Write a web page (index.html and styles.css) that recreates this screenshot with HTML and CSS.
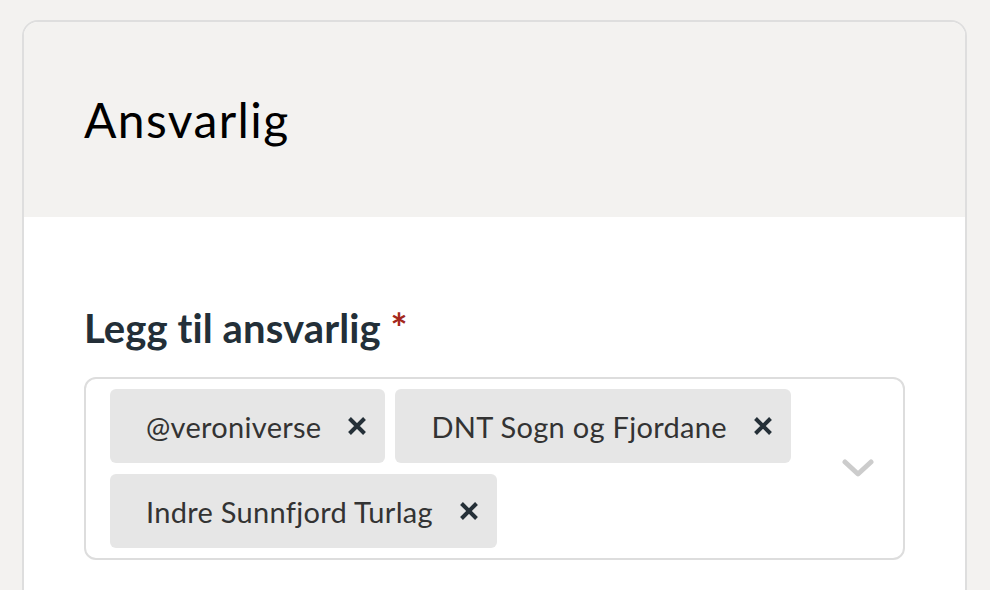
FILE: index.html
```html
<!DOCTYPE html>
<html lang="no">
<head>
<meta charset="utf-8">
<link rel="stylesheet" href="styles.css">
</head>
<body>
<div class="card">
  <div class="card-head">
    <h1 class="title">Ansvarlig</h1>
  </div>
  <div class="card-body">
    <label class="label">Legg til ansvarlig <span class="req">*</span></label>
    <div class="select">
      <div class="chips">
        <div class="chip"><span class="chip-text">@veroniverse</span><span class="chip-x"><svg width="18" height="18" viewBox="0 0 18 18"><path d="M1.5 1.5 L16.5 16.5 M16.5 1.5 L1.5 16.5" stroke="#253038" stroke-width="4"/></svg></span></div>
        <div class="chip"><span class="chip-text">DNT Sogn og Fjordane</span><span class="chip-x"><svg width="18" height="18" viewBox="0 0 18 18"><path d="M1.5 1.5 L16.5 16.5 M16.5 1.5 L1.5 16.5" stroke="#253038" stroke-width="4"/></svg></span></div>
        <div class="chip"><span class="chip-text">Indre Sunnfjord Turlag</span><span class="chip-x"><svg width="18" height="18" viewBox="0 0 18 18"><path d="M1.5 1.5 L16.5 16.5 M16.5 1.5 L1.5 16.5" stroke="#253038" stroke-width="4"/></svg></span></div>
      </div>
      <div class="indicator">
        <svg width="32" height="20" viewBox="0 0 32 20"><path d="M3 3 L16 15 L29 3" fill="none" stroke="#cccccc" stroke-width="5" stroke-linecap="round" stroke-linejoin="round"/></svg>
      </div>
    </div>
  </div>
</div>
</body>
</html>
```

FILE: styles.css
```css
html, body {
  margin: 0;
  padding: 0;
  background: #f3f2f0;
  font-family: Lato, "Open Sans", sans-serif;
  font-variant-ligatures: none;
}
body {
  padding: 20px 23px 0 22px;
  height: 590px;
  box-sizing: border-box;
  overflow: hidden;
}
.card {
  border: 2px solid #dedede;
  border-radius: 16px;
  overflow: hidden;
  background: #fff;
  height: 700px;
}
.card-head {
  background: #f3f2f0;
  height: 195px;
  box-sizing: border-box;
  padding: 0 60px;
  display: flex;
  align-items: center;
}
.title {
  margin: 0;
  font-size: 48px;
  font-weight: 400;
  letter-spacing: 1.4px;
  color: #000;
  line-height: 1;
}
.card-body {
  padding: 87px 60px 0 60px;
}
.label {
  display: block;
  font-size: 40px;
  font-weight: 700;
  letter-spacing: 0.1px;
  color: #232f38;
  line-height: 48px;
  margin-bottom: 25px;
}
.req {
  color: #a4281c;
}
.select {
  border: 2px solid #dddddd;
  border-radius: 12px;
  display: flex;
  align-items: center;
  padding: 10px 0 10px 24px;
  width: 821px;
  box-sizing: border-box;
}
.chips {
  flex: 1;
  display: flex;
  flex-wrap: wrap;
  gap: 11px 10px;
}
.chip {
  background: #e6e6e6;
  border-radius: 6px;
  height: 74px;
  display: flex;
  align-items: center;
  padding: 0 19px 0 36px;
}
.chip-text {
  font-size: 29px;
  letter-spacing: 0.3px;
  color: #333;
  margin-right: 27px;
}
.chip-x {
  display: flex;
  width: 18px;
  height: 18px;
}
.indicator {
  width: 32px;
  padding: 0 29px 0 16px;
  display: flex;
  align-items: center;
  justify-content: center;
}
```
